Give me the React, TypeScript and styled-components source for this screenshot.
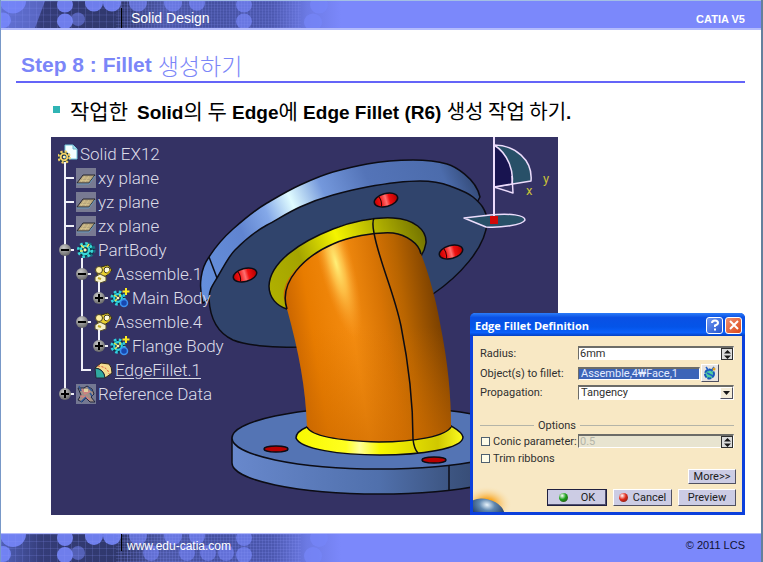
import React, { useState } from "react";
import styled, { createGlobalStyle, css } from "styled-components";

const GlobalStyle = createGlobalStyle`
  * { box-sizing: border-box; }
  body { margin: 0; background: #fff; font-family: "Liberation Sans", "Noto Sans CJK KR", sans-serif; }
  ul, h1, p { margin: 0; padding: 0; list-style: none; }
`;

const Page = styled.div`
  min-height: 100vh;
  display: flex;
  flex-direction: column;
  background: #fff;
  border-left: 1px solid #7898c8;
  border-right: 2px solid #64809c;
`;

const Band = styled.div<{ $foot?: boolean }>`
  position: relative;
  height: ${(p) => (p.$foot ? 29 : 30)}px;
  display: flex;
  align-items: stretch;
  justify-content: space-between;
  padding: 0 16px 0 120px;
  background: #7b88fb;
  color: #fff;
  border-top: 1px solid ${(p) => (p.$foot ? "#b4bcfc" : "#a4c0e4")};
  ${(p) => !p.$foot && css`border-bottom: 2px solid #b4bcfc;`}
`;

const Texture = styled.svg`
  position: absolute;
  left: 0;
  top: 0;
  width: 340px;
  height: 100%;
`;

const BandTitle = styled.span<{ $foot?: boolean }>`
  position: relative;
  display: flex;
  align-items: center;
  border-left: 1px solid #000;
  ${(p) => p.$foot
    ? css`font-size: 12px; margin-bottom: 11px; padding: 6px 0 0 5px;`
    : css`font-size: 14px; margin-top: 7px; padding: 0 0 0 9px;`}
`;

const SiteLink = styled.a`
  color: #fff;
  text-decoration: none;
`;

const BandNote = styled.span<{ $dark?: boolean }>`
  position: relative;
  align-self: center;
  font-size: 11px;
  font-weight: ${(p) => (p.$dark ? 400 : 700)};
  color: ${(p) => (p.$dark ? "#101030" : "#fff")};
  padding-top: ${(p) => (p.$dark ? 0 : 8)}px;
  padding-bottom: ${(p) => (p.$dark ? 7 : 0)}px;
`;

const Main = styled.main`
  flex: 1;
  display: flex;
  flex-direction: column;
  padding: 22px 16px 18px 15px;
`;

const Heading = styled.h1`
  display: flex;
  gap: 6px;
  height: 31px;
  padding-left: 5px;
  border-bottom: 2px solid #6464f8;
  font-size: 21px;
  line-height: 26px;
  color: #7b86f8;
  white-space: nowrap;
`;

const Ko = styled.span<{ $size: number; $light?: boolean }>`
  font-family: "Noto Sans CJK KR", sans-serif;
  font-size: ${(p) => p.$size}px;
  font-weight: ${(p) => (p.$light ? 300 : 400)};
  line-height: ${(p) => (p.$light ? 26 : 20)}px;
`;

const Bullet = styled.p`
  display: flex;
  align-items: center;
  gap: 10px;
  height: 54px;
  padding: 3px 0 0 37px;
  font-size: 19px;
  font-weight: 700;
  color: #000;
  white-space: nowrap;
  &::before {
    content: "";
    width: 7px;
    height: 7px;
    margin-top: -4px;
    background: #30b4b4;
  }
`;

const Lead3 = styled.span`
  margin-right: 9px;
`;

const Stage = styled.div`
  position: relative;
  margin-left: 35px;
  flex: 1;
  display: flex;
`;

const Viewer = styled.section`
  position: relative;
  width: 73%;
  min-height: 378px;
  padding: 5px 0 0 7px;
  background: #343264;
  overflow: hidden;
`;

const Scene = styled.svg`
  position: absolute;
  left: 0;
  top: 0;
  width: 100%;
  height: 100%;
`;

const Tree = styled.div`
  position: relative;
  font-family: Roboto, sans-serif;
  font-weight: 300;
  font-size: 17px;
  color: #dcdce8;
`;

const Branch = styled.ul<{ $root?: boolean }>`
  margin-left: ${(p) => (p.$root ? 6 : 17)}px;
`;

const Item = styled.li`
  position: relative;
  &::before {
    content: "";
    position: absolute;
    left: 0;
    top: -4px;
    bottom: 0;
    width: 2px;
    background: #f0f0f8;
  }
  &:last-child::before {
    bottom: auto;
    height: 17px;
  }
`;

const Row = styled.div`
  position: relative;
  display: flex;
  align-items: center;
  gap: 2px;
  height: 24px;
  white-space: nowrap;
`;

const Lead = styled.span`
  width: 10px;
  height: 12px;
  display: flex;
  align-items: center;
  background: linear-gradient(#f0f0f8, #f0f0f8) center / 100% 2px no-repeat;
`;

const Toggle = styled.button`
  flex: none;
  width: 12px;
  height: 12px;
  margin-left: -5px;
  padding: 0;
  border: 0;
  border-radius: 50%;
  background: radial-gradient(circle at 40% 30%, #c8c8c8, #707070 70%, #444);
  display: grid;
  place-items: center;
`;

const Label = styled.span<{ $active?: boolean }>`
  line-height: 20px;
  text-decoration: ${(p) => (p.$active ? "underline" : "none")};
  text-underline-offset: 2px;
`;

const Dialog = styled.form`
  position: absolute;
  right: 0;
  bottom: 0;
  width: 275px;
  height: 202px;
  display: flex;
  flex-direction: column;
  border: solid #0c40dc;
  border-width: 0 3px 3px;
  border-radius: 5px 5px 0 0;
  background: #f8e8c4;
  font-family: Roboto, "Noto Sans CJK KR", sans-serif;
  font-size: 11px;
  color: #303030;
`;

const TitleBar = styled.div`
  display: flex;
  align-items: center;
  gap: 2px;
  height: 23px;
  margin: 0 -3px;
  padding: 1px 3px 0 5px;
  border-radius: 5px 5px 0 0;
  background: linear-gradient(#2c7cf8, #0a50e4 20%, #0454e8 60%, #0a60fc 85%, #0640c0);
  color: #fff;
  font-family: "Open Sans", sans-serif;
  font-weight: 700;
`;

const TitleText = styled.span`
  flex: 1;
`;

const TitleButton = styled.button<{ $close?: boolean }>`
  width: 17px;
  height: 17px;
  padding: 0;
  border: 1px solid #fff;
  border-radius: 3px;
  display: grid;
  place-items: center;
  background: ${(p) => p.$close
    ? "linear-gradient(135deg, #f09070, #dc4818)"
    : "linear-gradient(135deg, #7098f0, #2454d0)"};
`;

const Body = styled.div`
  position: relative;
  flex: 1;
  display: flex;
  flex-direction: column;
  padding: 7px 8px 5px 7px;
`;

const Field = styled.div<{ $h: number }>`
  display: grid;
  grid-template-columns: 98px 1fr;
  align-items: center;
  height: ${(p) => p.$h}px;
`;

const inset = css`
  border: 1px solid;
  border-color: #6c6c68 #fff #fff #6c6c68;
  border-top-width: 2px;
`;

const SpinBox = styled.div<{ $off?: boolean }>`
  ${inset}
  display: flex;
  height: 14px;
  margin-right: 2px;
  background: ${(p) => (p.$off ? "#e8e4d0" : "#fff")};
`;

const TextInput = styled.input`
  flex: 1;
  min-width: 0;
  height: 11px;
  padding: 0 1px;
  border: 0;
  background: transparent;
  font: inherit;
  line-height: 11px;
  color: #303030;
  &:disabled { color: #b4b4a8; }
`;

const SpinButton = styled.button`
  width: 12px;
  height: 12px;
  padding: 0;
  border: 1px solid #303030;
  background: #dcdcdc;
  display: grid;
  place-items: center;
`;

const PickRow = styled.div`
  display: flex;
  align-items: center;
  gap: 1px;
`;

const PickInput = styled.input`
  ${inset}
  width: 122px;
  height: 13px;
  padding: 0 2px;
  background: #3c64b8;
  color: #e4ecff;
  font: inherit;
  line-height: 11px;
`;

const raised = css`
  border: 1px solid;
  border-color: #fff #505060 #505060 #fff;
`;

const PickButton = styled.button`
  ${raised}
  width: 18px;
  height: 18px;
  padding: 0;
  background: #e8e4e0;
  display: grid;
  place-items: center;
`;

const SelectWrap = styled.div`
  ${inset}
  position: relative;
  display: flex;
  height: 15px;
  background: #fff;
`;

const Select = styled.select`
  flex: 1;
  appearance: none;
  border: 0;
  padding: 0 2px;
  background: transparent;
  font: inherit;
  line-height: 12px;
  color: #303030;
`;

const SelectArrow = styled.span`
  ${raised}
  width: 13px;
  display: grid;
  place-items: center;
  background: #f4ecd8;
  pointer-events: none;
`;

const Divider = styled.div`
  display: flex;
  align-items: center;
  gap: 4px;
  height: 15px;
  margin-top: 17px;
  &::before, &::after {
    content: "";
    height: 1px;
    background: #b4b4a8;
    width: 54px;
  }
  &::after { flex: 1; width: auto; }
`;

const CheckLabel = styled.label`
  display: flex;
  align-items: center;
  gap: 3px;
  margin-left: 1px;
  white-space: nowrap;
`;

const CheckBox = styled.input`
  appearance: none;
  width: 9px;
  height: 9px;
  margin: 0;
  border: 1px solid #506070;
  background: #fffce8;
  &:checked { background: #506070; }
`;

const Actions = styled.div<{ $top: number }>`
  position: relative;
  display: flex;
  justify-content: flex-end;
  gap: 6px;
  margin: ${(p) => p.$top}px -2px 0 0;
`;

const ActionButton = styled.button<{ $w: number; $main?: boolean; $low?: boolean }>`
  ${raised}
  ${(p) => p.$main && css`border: 1px solid #202040; box-shadow: inset -1px -1px #505070;`}
  display: flex;
  align-items: center;
  justify-content: center;
  gap: 5px;
  width: ${(p) => p.$w}px;
  height: ${(p) => (p.$low ? 15 : 17)}px;
  padding: 0;
  background: #cccce4;
  font: inherit;
  color: #202020;
`;

const Dot = styled.i<{ $color: string; $wide?: boolean }>`
  width: 9px;
  height: 9px;
  margin-right: ${(p) => (p.$wide ? 8 : 0)}px;
  border-radius: 50%;
  background: radial-gradient(circle at 35% 30%, #fff, ${(p) => p.$color} 45%, #402020 110%);
`;

const Corner = styled.svg`
  position: absolute;
  left: 0;
  bottom: 0;
  width: 40px;
  height: 26px;
`;

const DOTS: [number, number, number][] = [
  [12, 0, 13], [2, 20, 8], [64, 4, 8], [64, 21, 8], [93, 2, 9], [111, 2, 9],
  [137, 2, 9], [172, 2, 9], [196, 2, 8], [243, 4, 8], [243, 21, 8], [318, 4, 9], [312, 22, 9], [77, 19, 7],
];

function BandTexture({ id, foot }: { id: string; foot?: boolean }) {
  return (
    <Texture viewBox="0 0 340 28" preserveAspectRatio="none" aria-hidden="true">
      <defs>
        <linearGradient id={`${id}f`}>
          <stop offset="0" stopColor="#5060b8" />
          <stop offset="0.12" stopColor="#343c78" />
          <stop offset="0.35" stopColor="#30386c" />
          <stop offset="0.48" stopColor="#4c58a8" />
          <stop offset="0.62" stopColor="#4450a0" />
          <stop offset="0.8" stopColor="#4c58b0" />
          <stop offset="0.9" stopColor="#6c7ae4" />
          <stop offset="1" stopColor="#7b88fb" />
        </linearGradient>
        <pattern id={`${id}p`} width="7" height="7" patternUnits="userSpaceOnUse">
          <path d="M0 .5H7M.5 0V7" stroke="#8c98f8" strokeOpacity=".18" />
        </pattern>
        <pattern id={`${id}q`} width="3" height="3" patternUnits="userSpaceOnUse">
          <path d="M0 .5H3M.5 0V3" stroke="#8c98f8" strokeOpacity=".18" />
        </pattern>
      </defs>
      <rect width="340" height="28" fill={`url(#${id}f)`} />
      {!foot && <path d="M0 0H44L34 28H0Z" fill="#6878e0" opacity=".7" />}
      {DOTS.map(([x, y, r], i) => (
        <circle key={i} cx={x} cy={y} r={r} fill="#7686fa" opacity={i > 12 ? 0.5 : i > 5 ? 0.7 : 0.9} />
      ))}
      {foot && [150, 186, 207, 225].map((x) => <circle key={x} cx={x} cy="19" r="8" fill="#7686fa" opacity=".6" />)}
      <rect width="130" height="28" fill={`url(#${id}p)`} />
      <rect x="115" width="185" height="28" fill={`url(#${id}q)`} />
    </Texture>
  );
}

type IconKind = "part" | "plane" | "body" | "assemble" | "newbody" | "fillet" | "data";

function Gear({ x, y, s, fill }: { x: number; y: number; s: number; fill: string }) {
  return (
    <g transform={`translate(${x} ${y}) scale(${s})`}>
      <circle r="5" fill="none" stroke="#0c3040" strokeWidth="5" />
      <circle r="7.5" fill="none" stroke={fill} strokeWidth="3" strokeDasharray="3 2.9" />
      <circle r="4.5" fill="none" stroke={fill} strokeWidth="2.6" />
      <circle r="1.6" fill="#fff8b0" />
    </g>
  );
}

function TreeIcon({ kind }: { kind: IconKind }) {
  return (
    <svg width="20" height="20" viewBox="0 0 20 20" aria-hidden="true">
      {kind === "part" && (<>
        <path d="M7 1h8l4 4v10H7z" fill="#f4ffff" stroke="#70c8dc" />
        <path d="M15 1v4h4" fill="#a0e0f0" stroke="#70b0c8" />
        <Gear x={6} y={13} s={0.75} fill="#f0d068" />
      </>)}
      {kind === "plane" && (<>
        <path d="M0 0h20v20H0z" fill="#787a92" />
        <path d="M1 15 7 7h12l-6 8z" fill="#b4a47c" stroke="#242430" />
        <path d="M1 16h12l6-8" fill="none" stroke="#6898b8" />
        <path d="M6 10h9M4 12.500h9M9 8l-4 6M13 8l-4 6" stroke="#dcc890" strokeWidth=".7" />
      </>)}
      {kind === "body" && (<>
        <Gear x={12} y={10} s={0.85} fill="#187080" />
        <Gear x={9} y={10} s={0.9} fill="#38d8d8" />
        <path d="M5 5l3 3M4 11h3M13 4l-2 3" stroke="#f0e860" strokeWidth="1.500" />
      </>)}
      {kind === "assemble" && (<>
        <path d="M5 4 15 1l4 5-6 6-9 1z" fill="#e8d030" stroke="#383018" />
        <circle cx="6" cy="6" r="3.500" fill="#fff0a0" stroke="#484020" />
        <circle cx="14" cy="6" r="3" fill="#fffbe0" stroke="#484020" />
        <path d="M2 13l5-3 6 3v4l-6 2-5-2z" fill="#f4f0c8" stroke="#585030" />
        <path d="M5 14l3 1M14 10l3-3" stroke="#c0a820" strokeWidth="2" />
      </>)}
      {kind === "newbody" && (<>
        <Gear x={8} y={10} s={0.85} fill="#30d0e0" />
        <path d="M4 7l3 2M5 13l2-2M10 6v3" stroke="#e0e840" strokeWidth="1.500" />
        <circle cx="14" cy="15" r="3.500" fill="#1848b0" stroke="#3c90f0" strokeWidth="1.500" />
        <path d="M16 0v7M12.500 3.500h7" stroke="#ffec20" strokeWidth="2" />
      </>)}
      {kind === "fillet" && (<>
        <path d="M2 8 8 3l8 1q3 3 3 9l-7 5Q11 9 2 8z" fill="#f4dc90" stroke="#302820" />
        <path d="M2 8q9 1 10 10H3z" fill="#30a8a0" stroke="#202838" />
        <path d="M5 6q10 1 11 8" fill="none" stroke="#e04830" strokeDasharray="2 1.500" />
      </>)}
      {kind === "data" && (<>
        <path d="M0 0h20v20H0z" fill="#747892" />
        <path d="M2 4h6l3-2 5 3 2 5-3 3 4 5-5 0-4-4-4 4-4-2 3-5z" fill="#a09088" stroke="#20243c" />
        <path d="M6 5l3 5 5-3M4 12l6 1 4 3" fill="none" stroke="#d08080" strokeWidth="1.500" />
        <path d="M3 2l2 5M12 3l4 4M5 18l5-5M14 9l2 3" fill="none" stroke="#305898" strokeWidth="1.500" />
        <path d="M8 5h4v3H8z" fill="#e0d0a0" />
      </>)}
    </svg>
  );
}

type Node = { label: string; icon: IconKind; open?: boolean; active?: boolean; children?: Node[] };

const NODES: Node[] = [
  { label: "xy plane", icon: "plane" },
  { label: "yz plane", icon: "plane" },
  { label: "zx plane", icon: "plane" },
  {
    label: "PartBody", icon: "body", open: true, children: [
      { label: "Assemble.1", icon: "assemble", open: true, children: [{ label: "Main Body", icon: "newbody", open: false }] },
      { label: "Assemble.4", icon: "assemble", open: true, children: [{ label: "Flange Body", icon: "newbody", open: false }] },
      { label: "EdgeFillet.1", icon: "fillet", active: true },
    ],
  },
  { label: "Reference Data", icon: "data", open: false },
];

function TreeNode({ node }: { node: Node }) {
  const [open, setOpen] = useState(node.open);
  return (
    <Item>
      <Row>
        <Lead>
          {node.open !== undefined && (
            <Toggle type="button" aria-label={node.label} aria-expanded={open} onClick={() => setOpen(!open)}>
              <svg width="8" height="8" viewBox="0 0 8 8" aria-hidden="true">
                <path d={open ? "M0 4H8" : "M0 4H8M4 0V8"} stroke="#000" strokeWidth="2" />
              </svg>
            </Toggle>
          )}
        </Lead>
        <TreeIcon kind={node.icon} />
        <Label $active={node.active}>{node.label}</Label>
      </Row>
      {open && node.children && (
        <Branch>{node.children.map((c) => <TreeNode key={c.label} node={c} />)}</Branch>
      )}
    </Item>
  );
}

function Hole({ x, y }: { x: number; y: number }) {
  return (
    <g transform={`translate(${x} ${y}) rotate(-15)`}>
      <ellipse rx="12" ry="6.500" fill="url(#hole)" stroke="#0c0c14" strokeWidth="1.500" />
      <path d="M-6-5Q-4 0-6 5" fill="none" stroke="#300" />
    </g>
  );
}

const PIPE = "M284 299C281 278 305 256 333 244C348 237 373 232 393 233C406 235 419 243 421 254C429 274 436 300 440 323C448 363 451 395 451 427C446 436 415 442 379 442C345 441 312 437 307 427C306 390 299 352 287 309Z";

function PipeScene() {
  return (
    <Scene viewBox="51 137 507 378" preserveAspectRatio="xMinYMin slice" role="img" aria-label="Pipe with two flanges">
      <defs>
        <linearGradient id="rim" gradientUnits="userSpaceOnUse" x1="200" y1="290" x2="480" y2="170">
          <stop offset="0" stopColor="#6490dc" />
          <stop offset=".2" stopColor="#6084d0" />
          <stop offset=".3" stopColor="#84a8e8" />
          <stop offset=".39" stopColor="#e0fcff" />
          <stop offset=".5" stopColor="#7498dc" />
          <stop offset=".65" stopColor="#5474b8" />
          <stop offset=".88" stopColor="#4c6cac" />
          <stop offset="1" stopColor="#2c4068" />
        </linearGradient>
        <linearGradient id="pipe" gradientUnits="userSpaceOnUse" x1="288" y1="330" x2="446" y2="305">
          <stop offset="0" stopColor="#c86400" />
          <stop offset=".15" stopColor="#e87c00" />
          <stop offset=".4" stopColor="#f48c10" />
          <stop offset=".6" stopColor="#d87404" />
          <stop offset=".74" stopColor="#b86400" />
          <stop offset="1" stopColor="#6c3800" />
        </linearGradient>
        <radialGradient id="shine" gradientUnits="userSpaceOnUse" cx="0" cy="0" r="1" gradientTransform="translate(336 263) rotate(75) scale(78 17)">
          <stop offset="0" stopColor="#fff078" />
          <stop offset=".4" stopColor="#ffc850" stopOpacity=".8" />
          <stop offset="1" stopColor="#f89828" stopOpacity="0" />
        </radialGradient>
        <linearGradient id="lower" x1="0" y1="0" x2="0" y2="1">
          <stop offset=".45" stopColor="#d47000" stopOpacity="0" />
          <stop offset="1" stopColor="#c86800" stopOpacity=".55" />
        </linearGradient>
        <linearGradient id="ringTop" gradientUnits="userSpaceOnUse" x1="270" y1="295" x2="425" y2="235">
          <stop offset="0" stopColor="#b0b000" />
          <stop offset=".25" stopColor="#a4a400" />
          <stop offset=".5" stopColor="#f4f400" />
          <stop offset=".72" stopColor="#b8b800" />
          <stop offset="1" stopColor="#747400" />
        </linearGradient>
        <linearGradient id="ringBase">
          <stop offset="0" stopColor="#f8f800" />
          <stop offset=".3" stopColor="#ffff20" />
          <stop offset=".38" stopColor="#ffff98" />
          <stop offset=".5" stopColor="#f8f800" />
          <stop offset=".85" stopColor="#d0c800" />
          <stop offset="1" stopColor="#fcfc20" />
        </linearGradient>
        <linearGradient id="base" gradientUnits="userSpaceOnUse" x1="232" y1="0" x2="526" y2="0">
          <stop offset="0" stopColor="#6888cc" />
          <stop offset=".5" stopColor="#5070ac" />
          <stop offset=".75" stopColor="#3c5480" />
          <stop offset="1" stopColor="#2c3c60" />
        </linearGradient>
        <linearGradient id="hole">
          <stop offset="0" stopColor="#c00000" />
          <stop offset=".25" stopColor="#f01010" />
          <stop offset=".5" stopColor="#ff7070" />
          <stop offset=".65" stopColor="#f01010" />
          <stop offset="1" stopColor="#b00000" />
        </linearGradient>
      </defs>

      <g stroke="#0c0c14" strokeWidth="1.500" strokeLinejoin="round">
        <path d="M203 303C198 285 201 268 209 257C216 246 224 237 233 229S255 210 267 203S289 190 300 185S322 175 333 172S356 166 367 164S396 160 413 160C430 160 440 162 447 164S476 178 480 197L470 215L240 260L209 299Z" fill="url(#rim)" />
        <path d="M209 299C209 290 212 286 217 278S228 257 235 250S256 231 267 225S289 212 300 207S322 198 333 195S356 189 367 187S402 181 420 181C433 181 442 183 450 186S467 192 473 197S487 209 487 222C486 248 458 277 433 294L420 320L297 347C270 348 245 345 233 340C218 333 210 318 209 299Z" fill="#30446c" />
        <path d="M209 257L217 278" fill="none" />

        <path d="M232 438V463A147 31 0 0 0 526 463V438Z" fill="url(#base)" />
        <ellipse cx="379" cy="438" rx="147" ry="31" fill="#5474b4" />
        <path d="M449 465V491" fill="none" />
        <ellipse cx="276" cy="449" rx="12" ry="3" fill="#b80000" />
        <ellipse cx="434" cy="460" rx="12" ry="3" fill="#b80000" />

        <path d="M307 427C300 430 296 434 296 438C300 449 340 455 380 455C420 455 463 449 463 437C462 432 456 429 451 426L445 420H312Z" fill="url(#ringBase)" />
        <path d="M287 309C277 306 269 298 269 286C270 262 300 242 333 229C350 222 373 217 393 218C414 219 427 230 426 243C425 249 423 253 421 256L400 262L310 290Z" fill="url(#ringTop)" />
        <path d={PIPE} fill="url(#pipe)" stroke="none" />
        <path d={PIPE} fill="url(#lower)" stroke="none" />
        <path d="M315 254L333 244L352 238L375 345H330Z" fill="url(#shine)" stroke="none" />
        <path d="M287 309C278 282 305 256 333 244C348 237 373 232 393 233C406 235 419 243 421 254M307 427C312 437 345 441 379 442C415 442 446 436 451 427" fill="none" />
        <path d="M374 218C372 222 373 228 374 233C379 261 394 292 401 326C409 366 413 405 413 439Q414 449 418 453" fill="none" />
      </g>
      <Hole x={245} y={275} />
      <Hole x={386} y={200} />
      <Hole x={451} y={252} />

      <g stroke="#ecdcfc" strokeWidth="1.500" strokeLinejoin="round">
        <path d="M494 145C515 145 533 160 531 181L494 187Z" fill="#285068" />
        <path d="M494 145C509 154 514 173 512 184L494 187Z" fill="#181450" />
        <path d="M512 176L513 193L494 187" fill="none" />
        <path d="M464 218L490 215C510 213 525 215 525 220C523 225 500 228 486 227Z" fill="#285068" />
        <path d="M494 137V216" strokeWidth="2" />
      </g>
      <path d="M490 216h8v8h-8z" fill="#d00808" />
      <g fill="#c8c038" fontFamily="Roboto, sans-serif" fontSize="13">
        <text x="526" y="195">x</text>
        <text x="543" y="183">y</text>
      </g>
    </Scene>
  );
}

function SpinGlyph() {
  return (
    <svg width="9" height="9" viewBox="0 0 9 9" aria-hidden="true">
      <path d="M4.500 0L8 3.500H1zM4.500 9L8 5.500H1z" fill="#181818" />
    </svg>
  );
}

function FilletDialog() {
  return (
    <Dialog aria-label="Edge Fillet Definition" onSubmit={(e) => e.preventDefault()}>
      <TitleBar>
        <TitleText>Edge Fillet Definition</TitleText>
        <TitleButton type="button" aria-label="Help">
          <svg width="10" height="12" viewBox="0 0 10 12" fill="none" stroke="#fff" strokeWidth="2" aria-hidden="true">
            <path d="M2 4Q2 1.500 5 1.500T8 4Q8 5.500 5 6.500V8M5 9.500V11.500" />
          </svg>
        </TitleButton>
        <TitleButton type="button" aria-label="Close" $close>
          <svg width="10" height="10" viewBox="0 0 10 10" stroke="#fff" strokeWidth="2" aria-hidden="true">
            <path d="M1 1L9 9M9 1L1 9" />
          </svg>
        </TitleButton>
      </TitleBar>
      <Body>
        <Corner viewBox="0 0 40 26" aria-hidden="true">
          <defs>
            <radialGradient id="glow"><stop offset=".3" stopColor="#f8a828" /><stop offset="1" stopColor="#f8e8c4" stopOpacity="0" /></radialGradient>
            <radialGradient id="globe" cx=".5" cy=".2"><stop offset="0" stopColor="#e8f4fc" /><stop offset=".4" stopColor="#6088b0" /><stop offset="1" stopColor="#203860" /></radialGradient>
          </defs>
          <ellipse cx="14" cy="18" rx="25" ry="18" fill="url(#glow)" />
          <ellipse cx="12" cy="27" rx="20" ry="14" transform="rotate(14 12 27)" fill="url(#globe)" />
        </Corner>
        <Field $h={20}>
          <label htmlFor="radius">Radius:</label>
          <SpinBox>
            <TextInput id="radius" defaultValue="6mm" />
            <SpinButton type="button" aria-label="Step radius"><SpinGlyph /></SpinButton>
          </SpinBox>
        </Field>
        <Field $h={20}>
          <label htmlFor="objects">Object(s) to fillet:</label>
          <PickRow>
            <PickInput id="objects" defaultValue="Assemble,4₩Face,1" />
            <PickButton type="button" aria-label="Edit objects">
              <svg width="14" height="14" viewBox="0 0 14 14" aria-hidden="true">
                <circle cx="6.500" cy="8" r="4.500" fill="#50d0a0" stroke="#1858b8" strokeWidth="2" strokeDasharray="4 1" />
                <path d="M3 1l3 4M11 1l-3 4M4 7l6 3" stroke="#2060c8" strokeWidth="1.500" />
                <circle cx="11" cy="3" r="1.500" fill="#e0a020" />
              </svg>
            </PickButton>
          </PickRow>
        </Field>
        <Field $h={18}>
          <label htmlFor="propagation">Propagation:</label>
          <SelectWrap>
            <Select id="propagation" defaultValue="Tangency"><option>Tangency</option><option>Minimal</option></Select>
            <SelectArrow>
              <svg width="7" height="4" viewBox="0 0 7 4" aria-hidden="true"><path d="M0 0h7L3.500 4z" fill="#181818" /></svg>
            </SelectArrow>
          </SelectWrap>
        </Field>
        <Divider>Options</Divider>
        <Field $h={16}>
          <CheckLabel><CheckBox type="checkbox" />Conic parameter:</CheckLabel>
          <SpinBox $off>
            <TextInput aria-label="Conic parameter value" defaultValue="0.5" disabled />
            <SpinButton type="button" aria-label="Step conic parameter" disabled><SpinGlyph /></SpinButton>
          </SpinBox>
        </Field>
        <Field $h={18}>
          <CheckLabel><CheckBox type="checkbox" />Trim ribbons</CheckLabel>
        </Field>
        <Actions $top={2}>
          <ActionButton type="button" $w={48} $low>More&gt;&gt;</ActionButton>
        </Actions>
        <Actions $top={5}>
          <ActionButton type="submit" $w={60} $main><Dot $color="#18a018" $wide />OK</ActionButton>
          <ActionButton type="button" $w={59}><Dot $color="#e02818" />Cancel</ActionButton>
          <ActionButton type="button" $w={58}>Preview</ActionButton>
        </Actions>
      </Body>
    </Dialog>
  );
}

export default function App() {
  return (
    <Page>
      <GlobalStyle />
      <Band as="header">
        <BandTexture id="top" />
        <BandTitle>Solid Design</BandTitle>
        <BandNote>CATIA V5</BandNote>
      </Band>
      <Main>
        <Heading>Step 8 : Fillet <Ko $size={23} $light>생성하기</Ko></Heading>
        <Bullet>
          <span>
            <Lead3><Ko $size={21}>작업한</Ko></Lead3>Solid<Ko $size={21}>의 두</Ko> Edge<Ko $size={21}>에</Ko> Edge Fillet (R6) <Ko $size={20}>생성 작업 하기</Ko>.
          </span>
        </Bullet>
        <Stage>
          <Viewer>
            <PipeScene />
            <Tree>
              <Row><TreeIcon kind="part" /><Label>Solid EX12</Label></Row>
              <Branch $root>{NODES.map((n) => <TreeNode key={n.label} node={n} />)}</Branch>
            </Tree>
          </Viewer>
          <FilletDialog />
        </Stage>
      </Main>
      <Band as="footer" $foot>
        <BandTexture id="bottom" foot />
        <BandTitle $foot><SiteLink href="http://www.edu-catia.com">www.edu-catia.com</SiteLink></BandTitle>
        <BandNote $dark>© 2011 LCS</BandNote>
      </Band>
    </Page>
  );
}
